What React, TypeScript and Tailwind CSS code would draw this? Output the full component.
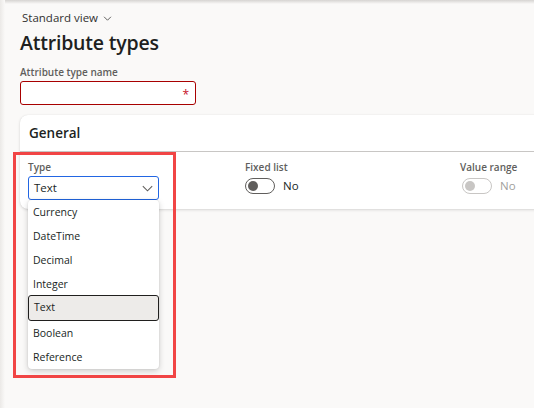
import React from "react";

function Chevron({ className }: { className?: string }) {
  return (
    <svg className={className} viewBox="0 0 16 16" fill="none" stroke="currentColor" strokeWidth="1.1">
      <path d="M3 5.5 L8 10.5 L13 5.5" />
    </svg>
  );
}

export default function App() {
  const items = ["Currency", "DateTime", "Decimal", "Integer", "Text", "Boolean", "Reference"];
  return (
    <div
      className="relative w-[534px] h-[408px] overflow-hidden bg-[#faf9f8] text-[#323130]"
      style={{ fontFamily: '"Open Sans", "Noto Sans", sans-serif' }}
    >
      <div className="absolute left-0 top-0 w-full h-[4px] bg-gradient-to-b from-[#d6d4d2] to-[#faf9f8]" />
      <div className="absolute left-0 top-0 h-full w-[5px] bg-gradient-to-r from-[#ebe9e7] to-[#faf9f8]" />

      <div className="flex flex-col pl-[20px] pt-[11px]">
        <div className="flex items-center gap-[4px] pl-[2px] text-[11.5px] leading-[14px] text-[#323130]">
          <span>Standard view</span>
          <Chevron className="w-[11px] h-[11px] mt-[1px]" />
        </div>
        <h1 className="mt-[5px] text-[19.5px] leading-[26px] font-semibold text-[#201f1e] tracking-[-0.2px]">Attribute types</h1>
        <div className="mt-[10px] text-[10px] leading-[13px] font-semibold text-[#605e5c]">Attribute type name</div>
        <div className="mt-[2px] w-[176px] h-[24px] border border-[#a80000] rounded-[3px] bg-white flex items-center justify-end pr-[6px]">
          <span className="text-[#c50f1f] text-[12px] leading-none mt-[3px]">*</span>
        </div>

        <div className="mt-[10px] w-[530px] rounded-l-[8px] bg-white shadow-[0_1px_3px_rgba(0,0,0,0.14),0_0_1px_rgba(0,0,0,0.1)]">
          <div className="h-[37px] flex items-center pl-[9px] border-b border-[#c8c6c4] text-[13.5px] font-semibold text-[#201f1e]">
            General
          </div>
          <div className="h-[57px] flex pt-[9px]">
            <div className="w-[225px] pl-[8px] flex flex-col">
              <div className="text-[10px] leading-[13px] font-semibold text-[#605e5c]">Type</div>
              <div className="mt-[2px] w-[131px] h-[24px] border border-[#2266e3] rounded-[3px] bg-white flex items-center justify-between pl-[5px] pr-[3px]">
                <span className="text-[11.5px] text-[#201f1e]">Text</span>
                <Chevron className="w-[15px] h-[15px] text-[#605e5c]" />
              </div>
            </div>
            <div className="w-[215px] flex flex-col">
              <div className="text-[10px] leading-[13px] font-semibold text-[#605e5c]">Fixed list</div>
              <div className="mt-[3px] flex items-center gap-[8px]">
                <div className="w-[30px] h-[16px] rounded-full border border-[#605e5c] flex items-center pl-[2px]">
                  <div className="w-[10px] h-[10px] rounded-full bg-[#605e5c]" />
                </div>
                <span className="text-[11.5px] text-[#201f1e]">No</span>
              </div>
            </div>
            <div className="flex flex-col">
              <div className="text-[10px] leading-[13px] font-semibold text-[#605e5c]">Value range</div>
              <div className="mt-[3px] ml-[2px] flex items-center gap-[8px]">
                <div className="w-[30px] h-[16px] rounded-full border border-[#c8c6c4] flex items-center pl-[2px]">
                  <div className="w-[10px] h-[10px] rounded-full bg-[#c8c6c4]" />
                </div>
                <span className="text-[11.5px] text-[#a19f9d]">No</span>
              </div>
            </div>
          </div>
        </div>
      </div>

      {/* dropdown list */}
      <div className="absolute left-[28px] top-[200px] w-[131px] h-[169px] bg-white rounded-[4px] shadow-[0_2px_6px_rgba(0,0,0,0.18),0_0_2px_rgba(0,0,0,0.12)] flex flex-col">
        {items.map((it) => (
          <div
            key={it}
            className={
              it === "Text"
                ? "h-[26px] mt-[-1px] shrink-0 flex items-center pl-[5px] text-[10.5px] text-[#201f1e] bg-[#edebe9] border border-[#201f1e] rounded-[3px]"
                : "h-[24px] shrink-0 flex items-center pl-[5px] pt-[2px] text-[10.5px] text-[#201f1e]"
            }
          >
            {it}
          </div>
        ))}
      </div>

      {/* annotation box */}
      <div className="absolute left-[13px] top-[152px] w-[163px] h-[226px] border-[3px] border-[#f14545] pointer-events-none" />
    </div>
  );
}
